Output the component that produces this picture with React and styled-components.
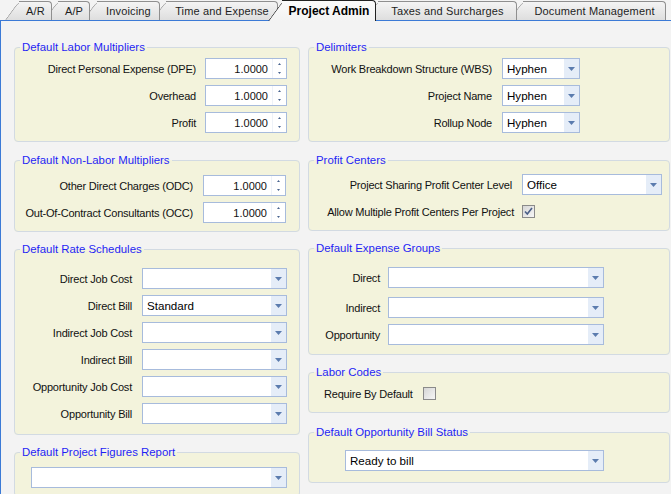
import React from 'react';
import styled, { createGlobalStyle } from 'styled-components';

const Global = createGlobalStyle`
  html, body { margin: 0; padding: 0; }
  body {
    width: 671px; height: 494px; overflow: hidden;
    background: #f3f3f3;
    font-family: "Liberation Sans", Arial, sans-serif;
    font-size: 11px; color: #111;
  }
  * { box-sizing: border-box; }
`;

const Window = styled.div`
  width: 671px; height: 494px; overflow: hidden;
  display: flex; flex-direction: column;
  background: #f3f3f3;
`;

const TabStrip = styled.div`
  flex: none; height: 20px; display: flex; padding-left: 5px;
`;

const Tab = styled.div`
  position: relative; flex: none;
  width: ${p => p.$w}px;
  height: ${p => (p.$active ? 21 : 19)}px;
  margin-top: ${p => (p.$active ? 0 : 1)}px;
  margin-left: ${p => p.$ml}px;
  z-index: ${p => (p.$active ? 50 : 20 - p.$i)};
  padding-left: 14px;
  display: flex; align-items: center; justify-content: center;
  font-size: ${p => (p.$active ? 12 : 11)}px;
  font-weight: ${p => (p.$active ? 'bold' : 'normal')};
  color: ${p => (p.$active ? '#000' : '#1e1e1e')};
  letter-spacing: ${p => (p.$active ? 0 : 0.15)}px;
  &::before {
    content: ''; position: absolute; left: 0; top: 0; bottom: 0; width: 26px;
    transform: skewX(-36deg); transform-origin: bottom left;
    border-left: 1px solid ${p => (p.$active ? '#222' : '#8f8f8f')};
    border-top: 1px solid ${p => (p.$active ? '#222' : '#8f8f8f')};
    border-top-left-radius: 6px;
    background: ${p => (p.$active ? 'linear-gradient(#fbfbfb, #f3f3f3)' : 'linear-gradient(#f4f4f4, #dedede)')};
  }
  &::after {
    content: ''; position: absolute; left: 14px; right: 0; top: 0; bottom: 0;
    border-top: 1px solid ${p => (p.$active ? '#222' : '#8f8f8f')};
    border-right: 1px solid ${p => (p.$active ? '#222' : '#8f8f8f')};
    border-top-right-radius: 4px;
    background: ${p => (p.$active ? 'linear-gradient(#fbfbfb, #f3f3f3)' : 'linear-gradient(#f4f4f4, #dedede)')};
  }
`;

const TabText = styled.span`
  position: relative; z-index: 1; white-space: nowrap;
`;

const Panel = styled.div`
  flex: 1;
  border-top: 1px solid #3b7ad6;
  border-left: 1px solid #3b7ad6;
  background: #f3f3f3;
  padding: 19px 0 0 13px;
  display: grid;
  grid-template-columns: 286px 362px;
  column-gap: 8px;
  align-items: start;
`;

const Column = styled.div`
  display: flex; flex-direction: column;
`;

const Group = styled.fieldset`
  margin: ${p => p.$mt || 0}px 0 0 0;
  min-width: 0;
  border: 1px solid #d2dae2;
  border-radius: 4px;
  background: #f3f3dc;
  padding: ${p => p.$pt}px 0 ${p => p.$pb}px 0;
  display: flex; flex-direction: column;
`;

const Legend = styled.legend`
  margin-left: 5px;
  padding: 0 2px;
  font-size: 11.4px;
  line-height: 14px;
  color: #1f1ff5;
`;

const Row = styled.div`
  display: flex; align-items: center;
  height: 21px;
  margin-top: ${p => p.$mt || 0}px;
  padding-left: ${p => p.$pl || 0}px;
`;

const Label = styled.div`
  width: ${p => p.$w}px;
  flex: none;
  text-align: ${p => (p.$left ? 'left' : 'right')};
  margin-right: ${p => p.$gap}px;
  white-space: nowrap;
  font-size: 11px;
  letter-spacing: -0.2px;
  color: #111;
`;

const SelectBox = styled.div`
  width: ${p => p.$w}px; height: 21px; flex: none;
  border: 1px solid #a7bbdc;
  background: #fff;
  display: flex;
`;

const SelectValue = styled.div`
  flex: 1; display: flex; align-items: center;
  padding-left: 4px;
  font-size: 11.6px; color: #000;
  white-space: nowrap; overflow: hidden;
`;

const SelectButton = styled.div`
  width: 15px; flex: none;
  background: #e5edf8;
  display: flex; align-items: center; justify-content: center;
`;

const SpinBox = styled.div`
  width: ${p => p.$w}px; height: 21px; flex: none;
  border: 1px solid #a7bbdc;
  background: #fff;
  display: flex;
`;

const SpinValue = styled.div`
  flex: 1; display: flex; align-items: center; justify-content: flex-end;
  padding-right: 4px;
  font-size: 11px; color: #111;
`;

const SpinButtons = styled.div`
  width: 14px; flex: none;
  border-left: 1px solid #eef2f8;
  display: flex; flex-direction: column; align-items: center; justify-content: space-between;
  padding: 4px 0 4px 0;
`;

const Check = styled.div`
  width: 13px; height: 13px; flex: none;
  border: 1px solid #8a8a8a;
  background: linear-gradient(135deg, #d6d6d6, #f6f6f6);
  display: flex; align-items: center; justify-content: center;
`;

const DownArrow = () => (
  <svg width="7" height="4" viewBox="0 0 7 4"><path d="M0 0h7L3.5 4z" fill="#5b7cae" /></svg>
);

const Select = ({ w, value }) => (
  <SelectBox $w={w}>
    <SelectValue>{value}</SelectValue>
    <SelectButton><DownArrow /></SelectButton>
  </SelectBox>
);

const Spin = ({ w, value }) => (
  <SpinBox $w={w}>
    <SpinValue>{value}</SpinValue>
    <SpinButtons>
      <svg width="3" height="2" viewBox="0 0 3 2"><path d="M1.5 0L3 2H0z" fill="#4a6590" /></svg>
      <svg width="3" height="2" viewBox="0 0 3 2"><path d="M0 0h3L1.5 2z" fill="#4a6590" /></svg>
    </SpinButtons>
  </SpinBox>
);

const CheckBox = ({ checked }) => (
  <Check>
    {checked && (
      <svg width="9" height="9" viewBox="0 0 9 9">
        <path d="M1 4.5l2.3 2.6L8 1" fill="none" stroke="#4b5f87" strokeWidth="1.6" />
      </svg>
    )}
  </Check>
);

const tabs = [
  { t: 'A/R', w: 47, ml: 0 },
  { t: 'A/P', w: 46, ml: -8 },
  { t: 'Invoicing', w: 77, ml: -7 },
  { t: 'Time and Expense', w: 126, ml: -8 },
  { t: 'Project Admin', w: 108, ml: -10, active: true },
  { t: 'Taxes and Surcharges', w: 153, ml: -12 },
  { t: 'Document Management', w: 157, ml: -8 },
];

export default function App() {
  return (
    <>
      <Global />
      <Window>
        <TabStrip>
          {tabs.map((t, i) => (
            <Tab key={t.t} $w={t.w} $ml={t.ml} $i={i} $active={t.active}>
              <TabText>{t.t}</TabText>
            </Tab>
          ))}
        </TabStrip>
        <Panel>
          <Column>
            <Group $pt={4} $pb={8}>
              <Legend>Default Labor Multipliers</Legend>
              <Row><Label $w={181} $gap={9}>Direct Personal Expense (DPE)</Label><Spin w={82} value="1.0000" /></Row>
              <Row $mt={6}><Label $w={181} $gap={9}>Overhead</Label><Spin w={82} value="1.0000" /></Row>
              <Row $mt={6}><Label $w={181} $gap={9}>Profit</Label><Spin w={82} value="1.0000" /></Row>
            </Group>
            <Group $mt={11} $pt={8} $pb={8}>
              <Legend>Default Non-Labor Multipliers</Legend>
              <Row><Label $w={178} $gap={10}>Other Direct Charges (ODC)</Label><Spin w={83} value="1.0000" /></Row>
              <Row $mt={6}><Label $w={178} $gap={10}>Out-Of-Contract Consultants (OCC)</Label><Spin w={83} value="1.0000" /></Row>
            </Group>
            <Group $mt={10} $pt={12} $pb={10}>
              <Legend>Default Rate Schedules</Legend>
              <Row><Label $w={117} $gap={10}>Direct Job Cost</Label><Select w={145} value="" /></Row>
              <Row $mt={6}><Label $w={117} $gap={10}>Direct Bill</Label><Select w={145} value="Standard" /></Row>
              <Row $mt={6}><Label $w={117} $gap={10}>Indirect Job Cost</Label><Select w={145} value="" /></Row>
              <Row $mt={6}><Label $w={117} $gap={10}>Indirect Bill</Label><Select w={145} value="" /></Row>
              <Row $mt={6}><Label $w={117} $gap={10}>Opportunity Job Cost</Label><Select w={145} value="" /></Row>
              <Row $mt={6}><Label $w={117} $gap={10}>Opportunity Bill</Label><Select w={145} value="" /></Row>
            </Group>
            <Group $mt={10} $pt={8} $pb={8}>
              <Legend>Default Project Figures Report</Legend>
              <Row $pl={16}><Select w={256} value="" /></Row>
            </Group>
          </Column>
          <Column>
            <Group $pt={4} $pb={8}>
              <Legend>Delimiters</Legend>
              <Row><Label $w={183} $gap={10}>Work Breakdown Structure (WBS)</Label><Select w={78} value="Hyphen" /></Row>
              <Row $mt={6}><Label $w={183} $gap={10}>Project Name</Label><Select w={78} value="Hyphen" /></Row>
              <Row $mt={6}><Label $w={183} $gap={10}>Rollup Node</Label><Select w={78} value="Hyphen" /></Row>
            </Group>
            <Group $mt={11} $pt={7} $pb={8}>
              <Legend>Profit Centers</Legend>
              <Row><Label $w={203} $gap={10}>Project Sharing Profit Center Level</Label><Select w={140} value="Office" /></Row>
              <Row $mt={6}><Label $w={205} $gap={8}>Allow Multiple Profit Centers Per Project</Label><CheckBox checked /></Row>
            </Group>
            <Group $mt={10} $pt={12} $pb={9}>
              <Legend>Default Expense Groups</Legend>
              <Row><Label $w={71} $gap={8}>Direct</Label><Select w={216} value="" /></Row>
              <Row $mt={9}><Label $w={71} $gap={8}>Indirect</Label><Select w={216} value="" /></Row>
              <Row $mt={6}><Label $w={71} $gap={8}>Opportunity</Label><Select w={216} value="" /></Row>
            </Group>
            <Group $mt={10} $pt={4} $pb={8}>
              <Legend>Labor Codes</Legend>
              <Row $pl={15}><Label $left $w={90} $gap={9}>Require By Default</Label><CheckBox /></Row>
            </Group>
            <Group $mt={12} $pt={11} $pb={11}>
              <Legend>Default Opportunity Bill Status</Legend>
              <Row $pl={36}><Select w={259} value="Ready to bill" /></Row>
            </Group>
          </Column>
        </Panel>
      </Window>
    </>
  );
}
